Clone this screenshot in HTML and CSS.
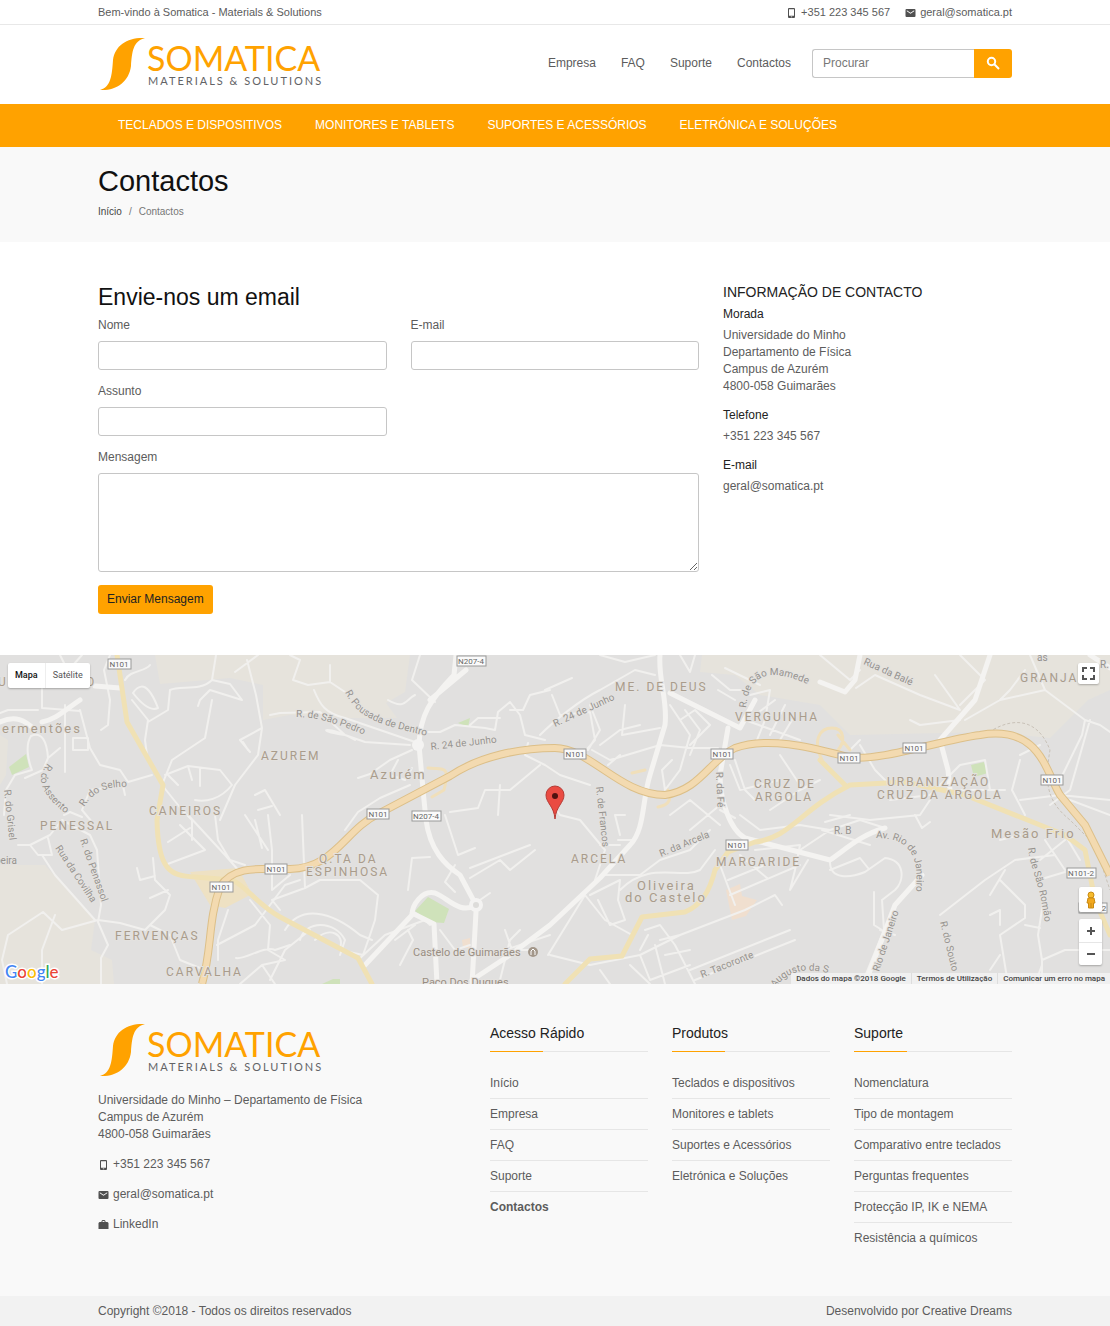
FILE: index.html
```html
<!DOCTYPE html>
<html lang="pt">
<head>
<meta charset="utf-8">
<meta name="viewport" content="width=device-width, initial-scale=1">
<title>Contactos - Somatica</title>
<link rel="stylesheet" href="styles.css">
</head>
<body>
<svg class="defs" width="0" height="0" aria-hidden="true">
  <symbol id="i-phone" viewBox="0 0 10 12"><path fill-rule="evenodd" d="M2.500 1h5a1 1 0 0 1 1 1v8a1 1 0 0 1-1 1h-5a1 1 0 0 1-1-1V2a1 1 0 0 1 1-1zM2.500 2.200v6.600h5V2.200zM4.300 9.500v.8h1.400v-.8z"/></symbol>
  <symbol id="i-mail" viewBox="0 0 10 12"><path fill-rule="evenodd" d="M1 2h8a1 1 0 0 1 1 1v6a1 1 0 0 1-1 1H1a1 1 0 0 1-1-1V3a1 1 0 0 1 1-1zM1.300 3.200v1L5 6.800l3.700-2.600v-1L5 5.700z"/></symbol>
  <symbol id="i-case" viewBox="0 0 10 12"><path fill-rule="evenodd" d="M3 3V2l1-1h2l1 1v1h2l1 1v6H0V4l1-1zM4 3h2V2H4z"/></symbol>
</svg>

<div class="topbar">
  <div class="container topbar-row">
    <span>Bem-vindo à Somatica - Materials &amp; Solutions</span>
    <div class="topbar-contacts">
      <span><svg class="icon"><use href="#i-phone"/></svg>+351 223 345 567</span>
      <a href="#"><svg class="icon"><use href="#i-mail"/></svg>geral@somatica.pt</a>
    </div>
  </div>
</div>

<header class="header">
  <div class="container header-row">
    <a href="#" aria-label="Somatica"><svg class="logo" viewBox="0 0 224 56">
      <path fill="#ffa200" d="M47 1C30 0 17 8 15 23C14 38 13 50 2 53C18 54 31 45 33 29C34 15 35 4 47 1z"/>
      <text class="logo-name" x="49" y="34">SOMATICA</text>
      <text class="logo-tag" x="50" y="48">MATERIALS &amp; SOLUTIONS</text>
    </svg></a>
    <div class="header-right">
      <nav class="links">
        <a href="#">Empresa</a><a href="#">FAQ</a><a href="#">Suporte</a><a href="#">Contactos</a>
      </nav>
      <form class="search">
        <input type="search" placeholder="Procurar" aria-label="Procurar">
        <button type="button" aria-label="Pesquisar"><svg viewBox="0 0 14 14"><circle cx="5.500" cy="5.500" r="3.700"/><path d="M8.300 8.300L13 13"/></svg></button>
      </form>
    </div>
  </div>
</header>

<nav class="mainnav">
  <div class="container mainnav-row">
    <a href="#">TECLADOS E DISPOSITIVOS</a><a href="#">MONITORES E TABLETS</a><a href="#">SUPORTES E ACESSÓRIOS</a><a href="#">ELETRÓNICA E SOLUÇÕES</a>
  </div>
</nav>

<div class="pagehead">
  <div class="container">
    <h1>Contactos</h1>
    <div class="crumbs"><a href="#">Início</a><span>/</span><span>Contactos</span></div>
  </div>
</div>

<main class="container contact">
  <form class="form">
    <h2>Envie-nos um email</h2>
    <div class="field"><label for="nome">Nome</label><input id="nome" type="text"></div>
    <div class="field"><label for="email">E-mail</label><input id="email" type="email"></div>
    <div class="field first"><label for="assunto">Assunto</label><input id="assunto" type="text"></div>
    <div class="field wide"><label for="mensagem">Mensagem</label><textarea id="mensagem"></textarea></div>
    <button class="send" type="button">Enviar Mensagem</button>
  </form>
  <aside class="info">
    <h3>INFORMAÇÃO DE CONTACTO</h3>
    <h4>Morada</h4>
    <p>Universidade do Minho<br>Departamento de Física<br>Campus de Azurém<br>4800-058 Guimarães</p>
    <h4>Telefone</h4>
    <p>+351 223 345 567</p>
    <h4>E-mail</h4>
    <p>geral@somatica.pt</p>
  </aside>
</main>

<section class="map" aria-label="Mapa">
<svg class="map-art" viewBox="0 655 1110 329" preserveAspectRatio="xMidYMid slice">
  <rect y="655" width="1110" height="329" fill="#e1e0df"/>
  <g fill="#e6e3dc">
    <path d="M155 655H410L405 692L386 703L397 718L350 718L290 715L263 720V685L230 678L160 684z"/>
    <path d="M0 865H45L95 920L91 950L112 960L114 984H0z"/>
    <path d="M702 655H1110V690L1088 700L1050 738L990 732L850 735L820 705L760 695L735 675L700 672z"/>
    <path d="M0 735L8 740L6 775L0 785z"/>
  </g>
  <g fill="#cfe2ba">
    <path d="M9 767L26 754L29 767L12 775z"/><path d="M415 911L428 897L449 909L444 923L430 922z"/>
    <path d="M971 765L984 762L988 773L974 777z"/><path d="M458 723L470 718L468 727z"/><path d="M322 984L333 979H340V984z"/>
  </g>
  <g fill="#f0dfcf">
    <path d="M726 890L740 884L742 896L757 900L746 916L732 920z"/><path d="M462 940l8-2v10h-7z"/>
  </g>
  <path fill="#eee1c3" d="M190 872L238 868L252 894L225 908L210 905z"/>

  <g class="r r1">
    <path d="M60 655L65 665M82 655L74 664M0 713L8 710H38M42 688V708L80 711M31 736C25 745 28 760 32 770L15 775L6 790L4 815M31 736C42 731 47 742 48 758L60 748M48 758L43 770L25 778M65 705V772M73 738H88V750H73zM80 710L90 748L100 765L120 770L128 782L152 775M110 700L108 725L101 730M110 655L104 670L110 700M125 680C130 670 145 672 150 665M132 700L148 720L145 740L147 755M133 693C145 675 155 700 158 708C150 712 140 702 133 693M148 722L168 710L170 690C180 685 200 692 212 680L216 655M212 680L230 684L242 700L210 690L200 700L198 706M235 672L258 655M247 660L256 695L262 728L258 755L235 785L220 820M262 728L240 740L250 752M243 742L248 750M212 700L205 738L172 760L162 785L182 810L192 820V840M165 775L188 766L220 770L232 785C220 800 205 802 195 800M188 766L192 780M200 768V786M168 775L178 785M255 795L265 790L280 815M258 810L272 806"/>
    <path d="M125 795L123 786L90 790L82 810L92 822M64 815L70 812L82 817"/>
    <path d="M18 845H30L50 835L62 820L90 835L97 850L101 905L98 922L108 945L101 958V984M30 845L38 855H52L48 838M42 855L55 875L95 920M7 984L2 960L8 935L43 912L62 930L98 920L120 923L145 930L165 910L170 895L155 880L153 858M55 915L42 950V984M137 868L140 880L155 876M168 890L150 898M165 865L205 850L180 825M168 842L190 828M188 815L225 855L240 872M215 815L218 840L230 860L245 865M150 925L170 935L180 960L200 968M218 960V940L228 910M217 945L255 925L285 885L300 880M236 958C245 960 265 945 275 950L290 945M245 815L268 850M255 820L262 848M268 815L272 850V890L290 875M250 900L270 925L268 950L285 960L262 965L240 984M262 965L275 984"/>
    <path d="M290 655L300 660L293 680L308 685L330 682L345 692M330 665V682M314 690C320 705 325 713 345 718L418 743M270 715L280 713L320 712L345 735L365 742L410 745M345 735C310 730 330 725 355 740M412 750L390 760L370 774L358 778M398 760L390 775L405 780L412 768M410 785L380 798L358 812L345 830M420 655L412 680L435 702M388 700C405 710 405 700 415 695M425 732H440L455 725L485 728L495 730L498 712L510 702L520 715L525 735L545 740M470 725L478 718L500 718M510 710H523L530 695L550 690M528 743L525 755L545 765L560 775L590 785M540 765L510 790L485 790L478 808L450 812M500 785L498 815"/>
    <path d="M302 815L305 888L320 880L360 880L378 895L375 920L370 935L363 955L340 950M305 888L272 900L280 910M285 930C300 905 330 910 360 935L372 940M300 940C305 920 335 920 345 940L340 955M315 940C330 925 345 935 340 948M358 960L385 935L425 920L430 925M395 940L415 925M400 965L413 940L408 930M408 890L412 858L430 857M270 980L285 950L310 930M445 815L458 855L475 848M455 865L445 882L455 892M470 868L530 845M470 878L500 860L510 870L535 850M480 900L490 893M500 980L510 940L520 930M490 955L550 935M440 930L455 950L470 945M505 930L512 950H530"/>
    <path d="M545 690L572 678M540 735C555 720 580 700 600 690L635 670L655 675M552 695L560 715L590 712L595 740L582 755M590 705L600 730L588 750M600 745L620 730L640 725M625 705L622 735L660 728M592 750L610 760L660 745L690 748M608 765L620 755M670 705L690 735L680 770L665 790L662 770L672 760M680 720L695 710L710 725L690 745M685 710L700 730L690 755M687 748H718M730 765L740 790L780 780M600 655L625 662L655 655M680 655L690 672L695 655M712 675L730 690L750 690M725 668L760 685M718 690L735 700M750 695L770 690L765 720M745 720L800 740M755 715L775 700M780 740L795 715M770 735L785 705M755 745L765 720M780 755L800 785M770 810L800 790L820 780M735 760L745 790L755 800M670 815L690 800L720 825M550 800L560 815L580 820L605 850L595 880M605 875L640 875L660 860L690 850L710 830M620 835L615 815H625M618 840H632M600 845H620M690 830L720 805M590 895L620 880L618 900L625 920L610 925L598 900M620 890C650 860 680 880 700 870L715 850M585 895L605 920L632 935M548 955L585 895M550 955L590 965L640 955L680 935L745 910L775 895L782 905M645 930L660 925L675 945L695 984M648 935L640 950M655 945L665 984M630 965L650 984M640 955L650 980L690 965M600 970L610 984M660 940L680 935M665 955L690 950M690 970L790 930M695 980L795 940M720 865L735 905M728 880L765 865M730 895L800 865M740 855L767 878M795 870L790 890L808 860M755 850L800 845L795 870"/>
    <path d="M740 815L760 830L800 825L830 830M735 818L720 810M800 850L830 830L860 820L885 828M822 830L870 845M825 822L850 815M830 862C830 880 850 878 865 872L885 858C905 860 905 880 895 890L882 900L884 930L862 984M874 892V925L882 930M880 930L895 935M830 870L860 858L868 868M915 815L922 828L930 822M940 915L985 880L1015 860L1030 858M1005 870L990 895M1000 880L1025 905L1025 918L1000 935L1008 984M1030 858L1055 855L1065 870M1040 860L1065 840M1045 878L1065 872M1045 890L1038 935L1042 960V984M1025 925L1040 928M1000 955L990 970M1042 960L1065 950H1110M1042 965L1035 984M990 915L1000 910V925"/>
    <path d="M850 750L860 740M820 655L850 680L860 670M856 688L875 675L920 695L960 710L935 675M910 720L920 725L960 720M960 655L985 680L960 705M1000 700L1010 690L1025 670M965 720L1000 700L1045 690L1085 720L1082 735L1060 780M1045 690L1030 655M1085 720L1100 725L1110 732M1090 720L1070 790L1050 805M1020 760L1012 790L1025 815M1020 800L1060 795L1110 800M1020 755L1040 745M860 745L875 770L890 785M890 800L930 795L960 765L985 760L990 790M1070 800L1110 815M1000 840L1020 835M830 815L870 820L920 815L930 800M960 790L1005 790M1065 835L1080 860M1055 855L1045 840"/>
  </g>
  <path class="dash" d="M985 735C1005 720 1035 712 1050 750C1045 780 1045 800 1070 820L1095 845L1110 890"/>
  <g class="r r2">
    <path d="M95 686L120 688M80 700C65 710 55 720 42 722M0 722C15 715 25 720 35 730M456 655L454 675C430 700 420 715 419 745L424 800L426 820C430 850 445 865 460 875L476 905M466 670L430 700M476 905C460 915 448 898 435 893C422 890 412 905 412 915L365 965M476 912L472 984M472 980L510 955L550 925L600 878L630 845C645 830 642 800 650 775L665 725C668 700 658 680 660 655M670 693L740 728L755 700M728 728L720 775C720 800 730 830 745 838L830 860C845 850 860 835 885 828M990 655L975 700L940 740L948 770L950 790M865 984L895 905L922 875M820 682L845 692L855 680L860 655M412 913L434 924L437 984M1090 655L1110 668"/>
  </g>
  <circle cx="476" cy="905" r="5" fill="#dddcda" stroke="#f4f3f2" stroke-width="4"/><circle cx="418" cy="745" r="6" fill="#f4f3f2"/>
  <g class="r y">
    <path d="M117 655L127 722L163 785L157 820C158 870 170 876 195 877L232 880C245 885 258 905 280 917L358 958L372 984M565 984L590 959L622 956L642 917L685 912C702 905 710 890 715 870L728 852L755 842C790 838 800 810 850 785L905 782L965 795L1065 835L1085 850L1095 900L1110 935M820 760L845 785"/>
  </g>
  <g class="r p"><path d="M428 768C445 770 450 765 444 790L432 797M658 807C670 805 672 798 668 790M632 773L645 770M822 760C812 740 820 728 832 728C845 728 845 742 838 750M838 735L850 750"/></g>
  <g>
    <path class="oe" d="M202 984C212 950 208 920 220 887C233 865 260 869 290 869C335 868 345 830 378 814L450 776C480 756 520 748 555 748C590 748 620 795 665 795C700 790 710 760 735 748C770 735 820 750 848 757C880 762 940 740 980 735C1040 725 1045 770 1060 795L1085 825L1110 875"/>
    <path class="of" d="M202 984C212 950 208 920 220 887C233 865 260 869 290 869C335 868 345 830 378 814L450 776C480 756 520 748 555 748C590 748 620 795 665 795C700 790 710 760 735 748C770 735 820 750 848 757C880 762 940 740 980 735C1040 725 1045 770 1060 795L1085 825L1110 875"/>
  </g>

  <g class="district">
    <text x="261" y="760">AZUREM</text><text x="149" y="815">CANEIROS</text><text x="40" y="830">PENESSAL</text>
    <text x="319" y="863">Q.TA DA</text><text x="306" y="876">ESPINHOSA</text><text x="115" y="940">FERVENÇAS</text>
    <text x="166" y="976">CARVALHA</text><text x="615" y="691">ME. DE DEUS</text><text x="735" y="721">VERGUINHA</text>
    <text x="754" y="788">CRUZ DE</text><text x="755" y="801">ARGOLA</text><text x="887" y="786">URBANIZAÇÃO</text>
    <text x="877" y="799">CRUZ DA ARGOLA</text><text x="571" y="863">ARCELA</text><text x="716" y="866">MARGARIDE</text>
    <text x="1020" y="682">GRANJA</text><text x="-2" y="686">U</text><text x="86" y="686">O</text>
  </g>
  <g class="town">
    <text x="2" y="733">ermentões</text><text x="370" y="779">Azurém</text><text x="637" y="890">Oliveira</text>
    <text x="625" y="902">do Castelo</text><text x="991" y="838">Mesão Frio</text>
  </g>
  <g class="poi"><text x="413" y="956">Castelo de Guimarães</text><text x="422" y="986">Paço Dos Duques</text></g>
  <circle cx="533" cy="952" r="5" fill="#a3978a"/><path d="M531 955v-4l2-2 2 2v4" fill="none" stroke="#fff"/>
  <g fill="none">
    <path id="s1" d="M296 717C320 717 340 725 372 738"/><path id="s2" d="M345 692C358 718 375 724 432 737"/>
    <path id="s3" d="M431 750L510 741"/><path id="s4" d="M555 727L625 695"/><path id="s5" d="M746 708C750 665 780 670 820 690"/>
    <path id="s6" d="M863 664L925 692"/><path id="s7" d="M48 763C32 780 44 800 78 822"/><path id="s8" d="M84 807C95 790 108 786 132 787"/>
    <path id="s9" d="M4 790L11 855"/><path id="s10" d="M55 848L100 916"/><path id="s11" d="M80 840L108 920"/>
    <path id="s12" d="M596 787L604 860"/><path id="s13" d="M716 772L718 820"/><path id="s14" d="M661 857L722 832"/>
    <path id="s15" d="M876 838C915 838 920 862 915 900"/><path id="s16" d="M879 972L904 896"/><path id="s17" d="M1028 848C1030 870 1042 885 1046 935"/>
    <path id="s18" d="M940 922L954 980"/><path id="s19" d="M702 978L765 953"/><path id="s20" d="M775 988C790 968 810 965 850 980"/>
  </g>
  <g class="street">
    <text><textPath href="#s1">R. de São Pedro</textPath></text><text><textPath href="#s2">R. Pousada de Dentro</textPath></text>
    <text><textPath href="#s3">R. 24 de Junho</textPath></text><text><textPath href="#s4">R. 24 de Junho</textPath></text>
    <text><textPath href="#s5">R. de São Mamede</textPath></text><text><textPath href="#s6">Rua da Balé</textPath></text>
    <text><textPath href="#s7">R. do Assento</textPath></text><text><textPath href="#s8">R. do Selho</textPath></text>
    <text><textPath href="#s9">R. do Grisel</textPath></text><text><textPath href="#s10">Rua da Covilha</textPath></text>
    <text><textPath href="#s11">R. do Penassol</textPath></text><text><textPath href="#s12">R. de Francos</textPath></text>
    <text><textPath href="#s13">R. da Fé</textPath></text><text><textPath href="#s14">R. da Arcela</textPath></text>
    <text><textPath href="#s15">Av. Rio de Janeiro</textPath></text><text><textPath href="#s16">Rio de Janeiro</textPath></text>
    <text><textPath href="#s17">R. de São Romão</textPath></text><text><textPath href="#s18">R. do Souto</textPath></text>
    <text><textPath href="#s19">R. Tacoronte</textPath></text><text><textPath href="#s20">Augusto da S</textPath></text>
    <text x="834" y="834">R. B</text><text x="1100" y="668">R.</text><text x="1037" y="661">as</text><text x="-5" y="864">beira</text>
  </g>
  <g class="shield">
    <rect x="108" y="659" width="23" height="10"/><rect x="457" y="656" width="29" height="10"/><rect x="367" y="809" width="22" height="10"/>
    <rect x="412" y="811" width="29" height="10"/><rect x="564" y="749" width="22" height="10"/><rect x="711" y="749" width="22" height="10"/>
    <rect x="838" y="753" width="22" height="10"/><rect x="903" y="743" width="23" height="10"/><rect x="1041" y="775" width="22" height="10"/>
    <rect x="265" y="864" width="22" height="10"/><rect x="210" y="882" width="23" height="10"/><rect x="726" y="840" width="22" height="10"/>
    <rect x="1067" y="868" width="29" height="10"/><rect x="1079" y="903" width="28" height="10"/>
  </g>
  <g class="shield-text">
    <text x="119" y="667">N101</text><text x="471" y="664">N207-4</text><text x="378" y="817">N101</text><text x="426" y="819">N207-4</text>
    <text x="575" y="757">N101</text><text x="722" y="757">N101</text><text x="849" y="761">N101</text><text x="914" y="751">N101</text>
    <text x="1052" y="783">N101</text><text x="276" y="872">N101</text><text x="221" y="890">N101</text><text x="737" y="848">N101</text>
    <text x="1081" y="876">N101-2</text><text x="1104" y="911">2</text>
  </g>
  <path d="M555 819C554 806 546 803 546 795A9 9 0 0 1 564 795C564 803 556 806 555 819z" fill="#ea4b42" stroke="#b53a34"/><circle cx="555" cy="796" r="3" fill="#4f1210"/>
</svg>
  <div class="map-types"><button type="button" class="on">Mapa</button><button type="button">Satélite</button></div>
  <button type="button" class="map-btn full" aria-label="Ecrã inteiro"><svg viewBox="0 0 13 13"><path d="M1 5V1h4M8 1h4v4M12 8v4H8M5 12H1V8"/></svg></button>
  <div class="map-side">
    <button type="button" class="map-btn peg" aria-label="Street View"><svg viewBox="0 0 12 18"><circle cx="6" cy="4" r="3" fill="#f6bb2c" stroke="#c98a12"/><path d="M3 7h6l1 5H8.500v5h-5v-5H2z" fill="#f2a81d" stroke="#c98a12"/><path d="M6 12v5" stroke="#c98a12"/></svg></button>
    <div class="zoom">
      <button type="button" aria-label="Ampliar"><svg viewBox="0 0 10 10"><path d="M1 5h8M5 1v8"/></svg></button>
      <button type="button" aria-label="Reduzir"><svg viewBox="0 0 10 10"><path d="M1 5h8"/></svg></button>
    </div>
  </div>
  <div class="google"><span class="b">G</span><span class="rd">o</span><span class="yl">o</span><span class="b">g</span><span class="gr">l</span><span class="rd">e</span></div>
  <div class="credits"><span>Dados do mapa ©2018 Google</span><a href="#">Termos de Utilização</a><a href="#">Comunicar um erro no mapa</a></div>
</section>

<footer class="footer">
  <div class="container footer-grid">
    <div class="about">
      <svg class="logo" viewBox="0 0 224 56">
        <path fill="#ffa200" d="M47 1C30 0 17 8 15 23C14 38 13 50 2 53C18 54 31 45 33 29C34 15 35 4 47 1z"/>
        <text class="logo-name" x="49" y="34">SOMATICA</text>
        <text class="logo-tag" x="50" y="48">MATERIALS &amp; SOLUTIONS</text>
      </svg>
      <p>Universidade do Minho – Departamento de Física<br>Campus de Azurém<br>4800-058 Guimarães</p>
      <p><svg class="icon"><use href="#i-phone"/></svg>+351 223 345 567</p>
      <p><a href="#"><svg class="icon"><use href="#i-mail"/></svg>geral@somatica.pt</a></p>
      <p><a href="#"><svg class="icon"><use href="#i-case"/></svg>LinkedIn</a></p>
    </div>
    <div><h5>Acesso Rápido</h5><ul><li><a href="#">Início</a></li><li><a href="#">Empresa</a></li><li><a href="#">FAQ</a></li><li><a href="#">Suporte</a></li><li><a href="#"><b>Contactos</b></a></li></ul></div>
    <div><h5>Produtos</h5><ul><li><a href="#">Teclados e dispositivos</a></li><li><a href="#">Monitores e tablets</a></li><li><a href="#">Suportes e Acessórios</a></li><li><a href="#">Eletrónica e Soluções</a></li></ul></div>
    <div><h5>Suporte</h5><ul><li><a href="#">Nomenclatura</a></li><li><a href="#">Tipo de montagem</a></li><li><a href="#">Comparativo entre teclados</a></li><li><a href="#">Perguntas frequentes</a></li><li><a href="#">Protecção IP, IK e NEMA</a></li><li><a href="#">Resistência a químicos</a></li></ul></div>
  </div>
</footer>
<div class="legal"><div class="container legal-row"><span>Copyright ©2018 - Todos os direitos reservados</span><span>Desenvolvido por Creative Dreams</span></div></div>
</body>
</html>
```
FILE: styles.css
```css
* { box-sizing: border-box; }
body { margin: 0; background: #fff; color: #5c5c5c; font: 12px/17px "Liberation Sans", Arial, sans-serif; }
a { color: inherit; text-decoration: none; }
h1, h2, h3, h4, h5, p, ul { margin: 0; padding: 0; font-weight: 400; }
ul { list-style: none; }
button, input, textarea { font: inherit; color: inherit; }
button { border: 0; padding: 0; background: none; cursor: pointer; }
.defs { position: absolute; }
.container { width: calc(100% - 32px); max-width: 914px; margin: 0 auto; }
.icon { width: 11px; height: 12px; margin-right: 4px; vertical-align: -3px; fill: #505050; }
.logo { display: block; width: 224px; height: 56px; overflow: visible; }
.logo-name { font: 400 34px Lato, sans-serif; fill: #ffa200; }
.logo-tag { font: 400 11px Lato, sans-serif; letter-spacing: 2px; fill: #626366; }

.topbar { border-bottom: 1px solid #e8e8e8; font-size: 11px; line-height: 24px; }
.topbar-row, .topbar-contacts, .header-row, .header-right, .links, .mainnav-row, .legal-row { display: flex; }
.topbar-row, .header-row, .legal-row { justify-content: space-between; }
.topbar-contacts { gap: 15px; }
.header { padding: 12px 0 11px; }
.header-right { align-items: center; align-self: flex-start; height: 52px; gap: 21px; }
.links { gap: 25px; }
.search { display: flex; width: 200px; }
.search input { flex: 1; min-width: 0; height: 29px; padding: 0 10px; border: 1px solid #c6c6c6; border-right: 0; border-radius: 3px 0 0 3px; }
.search input::placeholder { color: #777; }
.search button { width: 38px; border-radius: 0 3px 3px 0; background: #ffa200; }
.search svg { width: 14px; height: 14px; fill: none; stroke: #fff; stroke-width: 2; vertical-align: middle; }
.mainnav { background: #ffa200; color: #fff; }
.mainnav-row { gap: 33px; padding: 0 20px; line-height: 43px; }

.pagehead { height: 95px; padding-top: 16px; background: #f9f9f9; }
h1 { color: #111; font-size: 29px; line-height: 36px; }
.crumbs { display: flex; gap: 7px; margin-top: 4px; font-size: 10px; color: #777; }
.crumbs a { color: #444; }

.contact { display: grid; grid-template-columns: minmax(0, 601fr) minmax(0, 289fr); column-gap: 24px; padding: 40px 0 41px; }
.form { display: grid; grid-template-columns: repeat(2, minmax(0, 1fr)); column-gap: 24px; row-gap: 13px; }
.form h2 { grid-column: 1 / -1; margin-bottom: -8px; color: #111; font-size: 23px; line-height: 30px; }
.field { display: flex; flex-direction: column; gap: 7px; }
.field.first { grid-column: 1; }
.field.wide { grid-column: 1 / -1; }
.field input { width: 100%; height: 29px; }
.field input, .field textarea { padding: 5px 10px; border: 1px solid #c6c6c6; border-radius: 3px; background: #fff; }
.field textarea { height: 99px; resize: vertical; }
.send { justify-self: start; height: 29px; padding: 0 9px; border-radius: 3px; background: #ffa200; color: #222; }
.info h3 { color: #222; font-size: 14px; line-height: 20px; }
.info h4 { margin: 4px 0; color: #222; font-size: 12px; }
.info p { margin-bottom: 12px; }

.map { position: relative; overflow: hidden; font-family: Roboto, sans-serif; }
.map-art { display: block; width: 100%; height: 329px; }
.r { fill: none; stroke-linecap: round; stroke-linejoin: round; }
.r1 { stroke: #f1f0ee; stroke-width: 2; }
.r2 { stroke: #f4f3f1; stroke-width: 5; }
.y { stroke: #f0e1b4; stroke-width: 5; }
.p { stroke: #f0dfba; stroke-width: 3; }
.oe, .of { fill: none; stroke: #dcbf88; stroke-width: 8; }
.of { stroke: #f3dab0; stroke-width: 6; }
.dash { fill: none; stroke: #c9c2b8; stroke-dasharray: 3 2; }
.district, .town, .poi { fill: #a99c8c; stroke: #e4e2df; stroke-width: 2; paint-order: stroke; font: 12px Roboto, sans-serif; letter-spacing: 2px; }
.town { font-size: 13px; }
.poi { font-size: 11px; letter-spacing: 0; fill: #988d82; }
.street { fill: #96938f; stroke: #e4e2df; stroke-width: 2; paint-order: stroke; font: 10px Roboto, sans-serif; }
.shield { fill: #fafafa; stroke: #999; }
.shield-text { fill: #666; font: 8px Roboto, sans-serif; text-anchor: middle; }
.map-types { position: absolute; left: 8px; top: 8px; display: flex; font-size: 9px; box-shadow: 0 1px 2px #0004; background: #fff; border-radius: 2px; color: #555; }
.map-types button { height: 25px; padding: 0 7px; }
.map-types .on { color: #111; font-weight: 500; border-right: 1px solid #eee; }
.map-btn { background: #fff; border-radius: 2px; box-shadow: 0 1px 2px #0004; display: grid; place-items: center; }
.full { position: absolute; right: 11px; top: 8px; width: 21px; height: 21px; }
.full svg { width: 13px; height: 13px; fill: none; stroke: #555; stroke-width: 2; }
.map-side { position: absolute; right: 8px; bottom: 19px; display: grid; gap: 7px; width: 23px; }
.peg { height: 25px; }
.peg svg { width: 12px; height: 18px; }
.zoom { display: grid; background: #fff; border-radius: 2px; box-shadow: 0 1px 2px #0004; }
.zoom button { height: 23px; display: grid; place-items: center; }
.zoom button + button { border-top: 1px solid #e6e6e6; }
.zoom svg { width: 10px; height: 10px; stroke: #555; stroke-width: 2; }
.google { position: absolute; left: 5px; bottom: 2px; font: 500 17px/20px Lato, sans-serif; -webkit-text-stroke: 3px #fff; paint-order: stroke; }
.b { color: #4285f4; }
.rd { color: #ea4335; }
.yl { color: #fbbc05; }
.gr { color: #34a853; }
.credits { position: absolute; right: 0; bottom: 0; display: flex; background: #f4f4f4cc; color: #444; font-size: 8px; font-weight: 500; line-height: 11px; }
.credits > * { padding: 0 5px; }
.credits a { border-left: 1px solid #ddd; }

.footer { background: #f9f9f9; }
.footer-grid { display: grid; grid-template-columns: minmax(0, 368fr) repeat(3, minmax(0, 158fr)); column-gap: 24px; padding: 39px 0 43px; }
.about { display: grid; align-content: start; gap: 13px; }
.footer h5 { position: relative; height: 29px; border-bottom: 1px solid #e6e6e6; margin-bottom: 16px; color: #222; font-size: 14px; line-height: 20px; }
.footer h5::after { content: ""; position: absolute; left: 0; bottom: -1px; width: 53px; height: 1px; background: #ffa200; }
.footer li { line-height: 30px; border-bottom: 1px solid #e6e6e6; white-space: nowrap; }
.footer li:last-child { border-bottom: 0; }
.legal { background: #f2f2f2; line-height: 30px; }
```
